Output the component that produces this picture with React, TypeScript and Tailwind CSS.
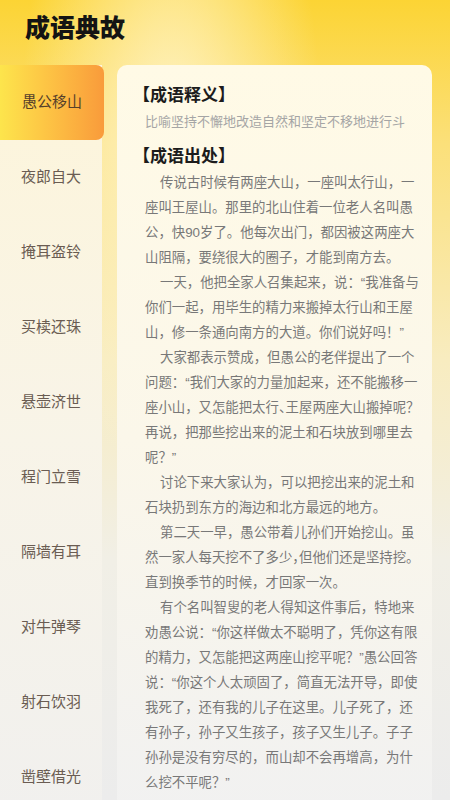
import React from "react";

const idioms = [
  "愚公移山",
  "夜郎自大",
  "掩耳盗铃",
  "买椟还珠",
  "悬壶济世",
  "程门立雪",
  "隔墙有耳",
  "对牛弹琴",
  "射石饮羽",
  "凿壁借光",
];

// "^" marks a punctuation mark that is squeezed to half width
const story = [
  "传说古时候有两座大山，一座叫太行山，一座叫王屋山。那里的北山住着一位老人名叫愚公，快90岁了。他每次出门，都因被这两座大山阻隔，要绕很大的圈子，才能到南方去。",
  "一天，他把全家人召集起来，说：“我准备与你们一起，用毕生的精力来搬掉太行山和王屋山，修一条通向南方的大道。你们说好吗！”",
  "大家都表示赞成，但愚公的老伴提出了一个问题：“我们大家的力量加起来，还不能搬移一座小山，又怎能把太行^、王屋两座大山搬掉呢？再说，把那些挖出来的泥土和石块放到哪里去呢？”",
  "讨论下来大家认为，可以把挖出来的泥土和石块扔到东方的海边和北方最远的地方。",
  "第二天一早，愚公带着儿孙们开始挖山。虽然一家人每天挖不了多少^，但他们还是坚持挖。直到换季节的时候，才回家一次。",
  "有个名叫智叟的老人得知这件事后，特地来劝愚公说：“你这样做太不聪明了，凭你这有限的精力，又怎能把这两座山挖平呢？”愚公回答说：“你这个人太顽固了，简直无法开导，即使我死了，还有我的儿子在这里。儿子死了，还有孙子，孙子又生孩子，孩子又生儿子。子子孙孙是没有穷尽的，而山却不会再增高，为什么挖不平呢？”",
];

function Paragraph({ text }: { text: string }) {
  const parts = text.split("^");
  return (
    <p className="indent-[15px]">
      {parts.map((part, i) =>
        i === 0 ? (
          <React.Fragment key={i}>{part}</React.Fragment>
        ) : (
          <React.Fragment key={i}>
            <span className="[font-feature-settings:'halt']">{part[0]}</span>
            {part.slice(1)}
          </React.Fragment>
        )
      )}
    </p>
  );
}

export default function App() {
  const active = 0;

  return (
    <div className="h-[800px] overflow-hidden font-['Liberation_Sans','Noto_Sans_CJK_SC',sans-serif] bg-[radial-gradient(ellipse_at_38%_16%,rgba(255,246,210,0.85)_0%,rgba(255,246,210,0)_38%),linear-gradient(180deg,#fcd434_0%,#fbe07a_18%,#f8ecc0_45%,#f1efe6_70%,#ececec_100%)]">
      {/* Header */}
      <header className="h-[65px] pl-[25px] pt-[12px]">
        <h1 className="text-[25px] leading-[32px] font-black text-[#141414]">成语典故</h1>
      </header>

      <div className="flex">
        {/* Sidebar */}
        <aside className="w-[102px] shrink-0 bg-gradient-to-b from-[#fdf5da] via-[#f8f4e8] to-[#f1f0ee]">
          {idioms.map((name, i) => (
            <div
              key={name}
              className={
                i === active
                  ? "h-[75px] w-[104px] flex items-center justify-center rounded-r-[8px] bg-gradient-to-r from-[#fde54c] to-[#f99b3b] text-[15px] text-[#55402a]"
                  : "h-[75px] flex items-center justify-center text-[15px] text-[#6a5c52]"
              }
            >
              {name}
            </div>
          ))}
        </aside>

        {/* Content card */}
        <main className="ml-[15px] mr-[18px] flex-1 rounded-[10px] bg-gradient-to-b from-[#fffae6] via-[#fbf7ea] to-[#f1f1f1] pl-[28px] pr-[11px] pt-[19px]">
          <h2 className="-ml-[12px] text-[17px] leading-[24px] font-bold text-[#1c1c1c]">【成语释义】</h2>
          <p className="mt-[4px] whitespace-nowrap text-[13px] leading-[20px] text-[#a5a5a5]">
            比喻坚持不懈地改造自然和坚定不移地进行斗
          </p>
          <h2 className="-ml-[12px] mt-[13px] text-[17px] leading-[24px] font-bold text-[#1c1c1c]">【成语出处】</h2>
          <div className="mt-[1px] text-[13.4px] leading-[25px] text-[#787878]">
            {story.map((para, i) => (
              <Paragraph key={i} text={para} />
            ))}
          </div>
        </main>
      </div>
    </div>
  );
}
